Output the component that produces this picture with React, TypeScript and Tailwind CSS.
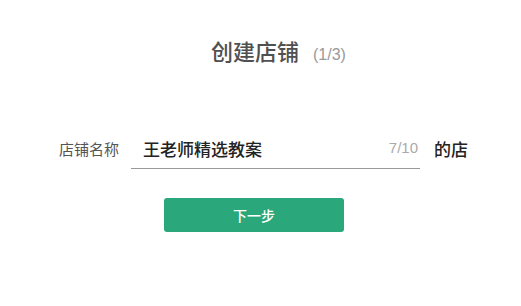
export default function App() {
  return (
    <div
      className="w-[521px] h-[306px] bg-white overflow-hidden"
      style={{ fontFamily: '"Noto Sans CJK SC", "Liberation Sans", sans-serif' }}
    >
      {/* Title */}
      <div className="flex items-baseline pl-[211px] pt-[34px] h-[119px]">
        <h1 className="text-[22px] leading-[32px] text-[#505050] font-medium">创建店铺</h1>
        <span className="ml-[14px] text-[16px] text-[#999]" style={{ fontFamily: '"Liberation Sans", sans-serif' }}>(1/3)</span>
      </div>

      {/* Shop name input */}
      <div className="flex items-center h-[60px]">
        <label className="ml-[59px] w-[72px] text-[15px] text-[#555]">店铺名称</label>
        <div className="flex items-center w-[289px] h-[40px] border-b border-[#999] pl-[12px] pr-[2px]">
          <span className="flex-1 text-[17px] text-[#222] font-medium">王老师精选教案</span>
          <span className="text-[15px] text-[#aaa]" style={{ fontFamily: '"Liberation Sans", sans-serif' }}>7/10</span>
        </div>
        <span className="ml-[14px] text-[17px] text-[#222] font-medium">的店</span>
      </div>

      {/* Next button */}
      <div className="pl-[164px] pt-[19px]">
        <button className="w-[180px] h-[34px] rounded-[3px] bg-[#2aa77b] text-white text-[14px] font-medium flex items-center justify-center">
          下一步
        </button>
      </div>
    </div>
  )
}
